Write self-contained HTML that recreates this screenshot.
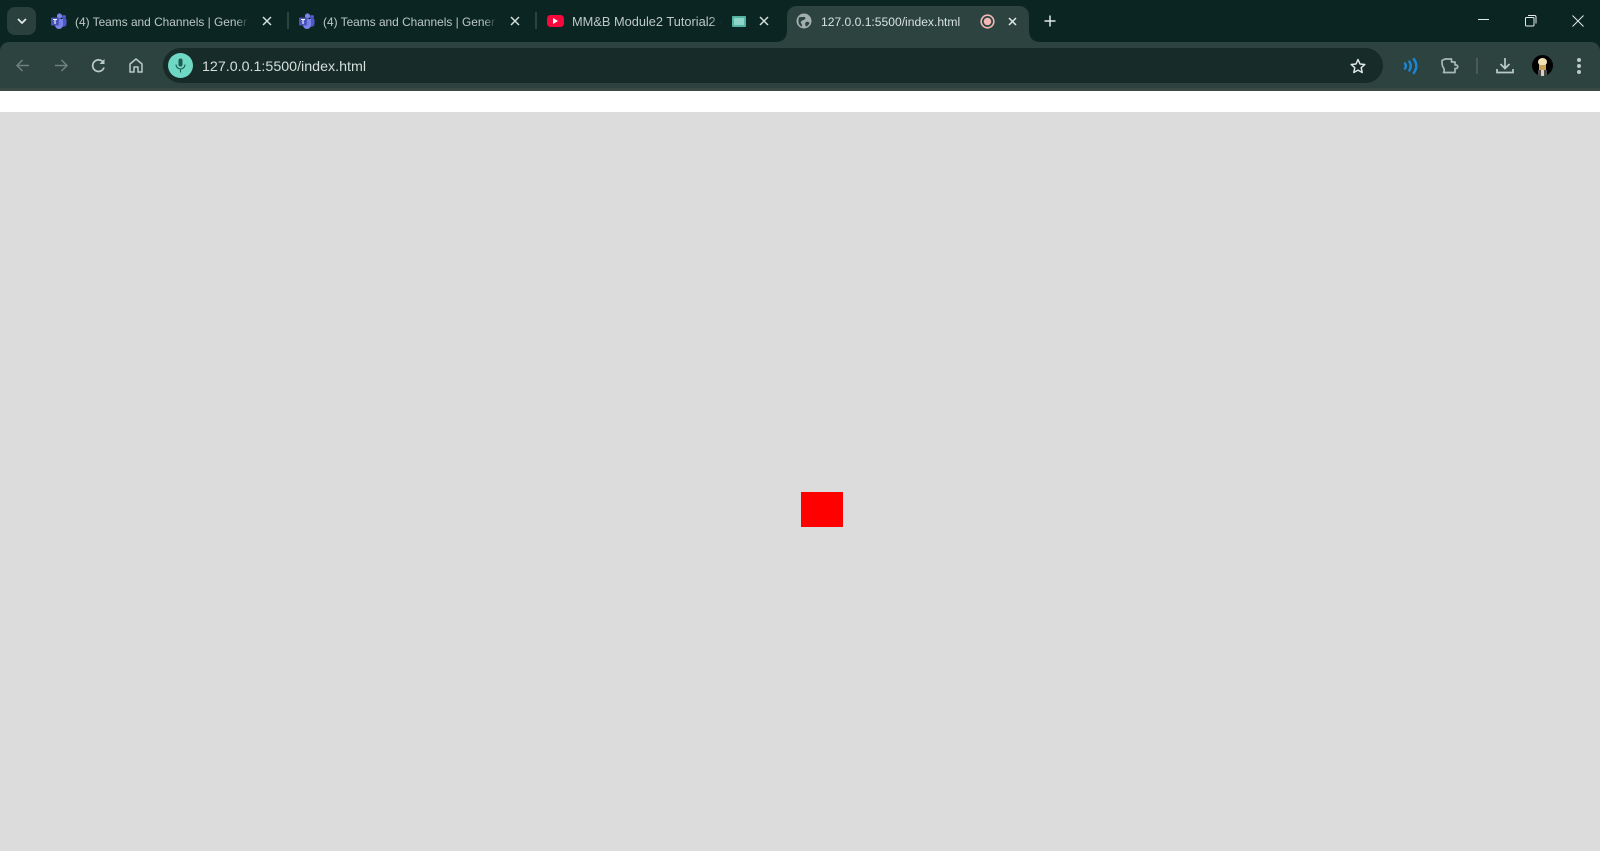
<!DOCTYPE html>
<html lang="en"><head><meta charset="utf-8"><title>127.0.0.1:5500/index.html</title>
<style>
html,body{margin:0;padding:0;width:1600px;height:851px;overflow:hidden;background:#dcdcdc}
body{position:relative;font-family:"Liberation Sans",sans-serif}
.a{position:absolute}
.t{position:absolute;font-size:12.1px;line-height:16px;top:14px;color:#bdc9c6;white-space:nowrap;overflow:hidden;filter:blur(.2px)}
svg{position:absolute;overflow:visible}
</style></head><body>
<div class="a" style="left:0;top:0;width:1600px;height:60px;background:#0b2522"></div>
<div class="a" style="left:0;top:42px;width:1600px;height:46px;background:#2c4340;border-radius:9px 9px 0 0"></div>
<div class="a" style="left:0;top:88px;width:1600px;height:3px;background:#3b4846"></div>
<div class="a" style="left:0;top:91px;width:1600px;height:21px;background:#fff"></div>
<div class="a" style="left:0;top:112px;width:1600px;height:739px;background:#dcdcdc"></div>
<div class="a" style="left:801px;top:492px;width:42px;height:35px;background:#f00"></div>

<!-- tab search -->
<div class="a" style="left:7px;top:7px;width:29px;height:28px;background:#29403c;border-radius:8px"></div>
<svg style="left:17px;top:17px" width="10" height="8" viewBox="0 0 10 8"><path d="M1 2l4 4 4-4" fill="none" stroke="#dfe8e5" stroke-width="1.8"/></svg>

<!-- teams 1 -->
<svg style="left:50px;top:13px" width="17" height="16" viewBox="0 0 17 16"><circle cx="9.500" cy="3" r="2.600" fill="#7b83eb"/><circle cx="14" cy="4" r="2" fill="#5059c9"/><path d="M11 6h5.500v5a3 3 0 0 1-4 2.500z" fill="#5059c9"/><path d="M5 6h8v6a4 4 0 0 1-8 0z" fill="#7b83eb"/><rect x="1" y="4.500" width="8" height="8" rx="1" fill="#4b53bc"/><path d="M3 6.500h4M5 6.500v4.500" stroke="#fff" stroke-width="1.100"/></svg>
<div class="t" style="left:75px;width:175px;font-size:11.9px">(4) Teams and Channels | Gener</div>
<div class="a" style="left:236px;top:12px;width:14px;height:20px;background:linear-gradient(90deg,rgba(11,37,34,0),#0b2522 90%)"></div>
<svg style="left:262px;top:16px" width="10" height="10" viewBox="0 0 10 10"><path d="M1 1l8 8M9 1l-8 8" stroke="#d4dedb" stroke-width="1.500"/></svg>
<div class="a" style="left:287px;top:12px;width:1.500px;height:17px;background:#2d4340"></div>

<!-- teams 2 -->
<svg style="left:298px;top:13px" width="17" height="16" viewBox="0 0 17 16"><circle cx="9.500" cy="3" r="2.600" fill="#7b83eb"/><circle cx="14" cy="4" r="2" fill="#5059c9"/><path d="M11 6h5.500v5a3 3 0 0 1-4 2.500z" fill="#5059c9"/><path d="M5 6h8v6a4 4 0 0 1-8 0z" fill="#7b83eb"/><rect x="1" y="4.500" width="8" height="8" rx="1" fill="#4b53bc"/><path d="M3 6.500h4M5 6.500v4.500" stroke="#fff" stroke-width="1.100"/></svg>
<div class="t" style="left:323px;width:175px;font-size:11.9px">(4) Teams and Channels | Gener</div>
<div class="a" style="left:484px;top:12px;width:14px;height:20px;background:linear-gradient(90deg,rgba(11,37,34,0),#0b2522 90%)"></div>
<svg style="left:510px;top:16px" width="10" height="10" viewBox="0 0 10 10"><path d="M1 1l8 8M9 1l-8 8" stroke="#d4dedb" stroke-width="1.500"/></svg>
<div class="a" style="left:535px;top:12px;width:1.500px;height:17px;background:#2d4340"></div>

<!-- youtube -->
<div class="a" style="left:547px;top:15px;width:17px;height:12px;background:#f5093c;border-radius:3.500px"></div>
<svg style="left:553px;top:18px" width="6" height="6" viewBox="0 0 6 6"><path d="M0 0l5 3-5 3z" fill="#fff"/></svg>
<div class="t" style="left:572px;width:152px;font-size:12.8px">MM&amp;B Module2 Tutorial2 - Google</div>
<div class="a" style="left:710px;top:12px;width:14px;height:20px;background:linear-gradient(90deg,rgba(11,37,34,0),#0b2522 85%)"></div>
<div class="a" style="left:732px;top:16px;width:10px;height:7px;border:2px solid #55b5a4;background:#8fd6c8;border-radius:1px"></div>
<svg style="left:759px;top:16px" width="10" height="10" viewBox="0 0 10 10"><path d="M1 1l8 8M9 1l-8 8" stroke="#d4dedb" stroke-width="1.500"/></svg>

<!-- active tab -->
<svg style="left:775px;top:6px" width="266" height="37" viewBox="0 0 266 37"><path d="M0 36c8 0 12-4 12-12V10C12 4 16 0 22 0H244c6 0 10 4 10 10V24c0 8 4 12 12 12z" fill="#2c4340"/></svg>
<svg style="left:796px;top:13px" width="16" height="16" viewBox="0 0 16 16"><circle cx="8" cy="8" r="7.500" fill="#a3afac"/><path d="M3 4.500c2-.8 4-.5 6-.5 1 1 0 2.500-1.500 3S4 8.500 5 10c.5 1 1.500 2 1 3.500C4 13 2.500 11 2.500 8.500c0-1.500 0-3 .5-4zM10 9c1.500-.5 3 0 3.500 1-.5 1.500-2 3-3.500 3.500-1-1.500-1.200-3.500 0-4.500z" fill="#2c4340"/></svg>
<div class="t" style="left:821px;color:#d8e2df">127.0.0.1:5500/index.html</div>
<svg style="left:980px;top:14px" width="15" height="15" viewBox="0 0 15 15"><circle cx="7.500" cy="7.500" r="6.300" fill="none" stroke="#f2b8b5" stroke-width="1.600"/><circle cx="7.500" cy="7.500" r="3.800" fill="#f2b8b5"/></svg>
<svg style="left:1008px;top:17px" width="9" height="9" viewBox="0 0 9 9"><path d="M1 1l7 7M8 1l-7 7" stroke="#dfe8e5" stroke-width="1.500"/></svg>
<svg style="left:1044px;top:15px" width="12" height="12" viewBox="0 0 12 12"><path d="M6 .5v11M.5 6h11" stroke="#dfe8e5" stroke-width="1.500"/></svg>

<!-- window controls -->
<svg style="left:1478px;top:19px" width="12" height="2" viewBox="0 0 12 2"><path d="M0 .5h11" stroke="#e3ebe9" stroke-width="1"/></svg>
<svg style="left:1525px;top:15px" width="12" height="12" viewBox="0 0 12 12"><rect x=".5" y="2.500" width="8.500" height="8.500" rx="1" fill="none" stroke="#e3ebe9"/><path d="M3 .5h6.500a1.500 1.500 0 0 1 1.500 1.500v6.500" fill="none" stroke="#e3ebe9"/></svg>
<svg style="left:1572px;top:15px" width="12" height="12" viewBox="0 0 12 12"><path d="M.5.500l11 11M11.500.5l-11 11" stroke="#e3ebe9" stroke-width="1"/></svg>

<!-- nav -->
<svg style="left:16px;top:59px" width="14" height="13" viewBox="0 0 14 13"><path d="M13 6.500H1.500M6.500 1l-5.500 5.500 5.500 5.500" fill="none" stroke="#6d817d" stroke-width="1.500"/></svg>
<svg style="left:54px;top:59px" width="14" height="13" viewBox="0 0 14 13"><path d="M1 6.500h11.500M7.500 1l5.500 5.500-5.500 5.500" fill="none" stroke="#6d817d" stroke-width="1.500"/></svg>
<svg style="left:91px;top:58px" width="15" height="15" viewBox="0 0 15 15"><path d="M13 9.500a5.800 5.800 0 1 1-1-5.500" fill="none" stroke="#bccac6" stroke-width="1.700"/><path d="M13.500 1v5H8.500z" fill="#bccac6"/></svg>
<svg style="left:129px;top:58px" width="14" height="15" viewBox="0 0 14 15"><path d="M1 6l6-5 6 5v8H9V9H5v5H1z" fill="none" stroke="#bccac6" stroke-width="1.500" stroke-linejoin="round"/></svg>

<!-- omnibox -->
<div class="a" style="left:163px;top:48px;width:1220px;height:35px;background:#172b28;border-radius:18px"></div>
<div class="a" style="left:168px;top:53px;width:25px;height:25px;background:#6fd8c4;border-radius:50%"></div>
<svg style="left:175px;top:58px" width="11" height="15" viewBox="0 0 11 15"><rect x="3.500" y="0.500" width="4" height="8" rx="2" fill="#1c5a50"/><path d="M1 6.500a4.500 4.500 0 0 0 9 0M5.500 11v3.500" fill="none" stroke="#1c5a50" stroke-width="1.100"/></svg>
<div class="a" style="left:202px;top:58px;font-size:14.25px;line-height:18px;color:#d5dfdc;white-space:nowrap;filter:blur(.2px)">127.0.0.1:5500/index.html</div>
<svg style="left:1350px;top:58px" width="16" height="16" viewBox="0 0 16 16"><path d="M8 1.500l2 4.500 4.800.5-3.600 3.200 1 4.800L8 12.100 3.800 14.500l1-4.800L1.200 6.500 6 6z" fill="none" stroke="#dfe8e5" stroke-width="1.500" stroke-linejoin="round"/></svg>

<!-- right toolbar -->
<svg style="left:1403px;top:58px" width="16" height="16" viewBox="0 0 16 16"><path d="M2 5.500q1.800 2.500 0 5M6.300 3.500q3 4.500 0 9M10.800 1q5 7 0 14" fill="none" stroke="#1a86d8" stroke-width="2.400" stroke-linecap="round"/></svg>
<svg style="left:1440px;top:57px" width="18" height="17" viewBox="0 0 18 17"><path d="M2 3.500l3-1.500h6.500v3h3.500v3h1a1.600 1.600 0 0 1 0 3.500h-1v4H3.500c1-2 1.200-3-.5-5.500C2.200 9 2 6 2 3.500z" fill="none" stroke="#a8bab6" stroke-width="1.700" stroke-linejoin="round"/></svg>
<div class="a" style="left:1476px;top:58px;width:1.500px;height:16px;background:#475c58"></div>
<svg style="left:1496px;top:57px" width="18" height="17" viewBox="0 0 18 17"><path d="M9 1v10M4.500 7l4.500 4.500L13.500 7M1 12v3.500h16V12" fill="none" stroke="#bccac6" stroke-width="1.700"/></svg>
<div class="a" style="left:1532px;top:55px;width:21px;height:21px;background:#000;border-radius:50%;overflow:hidden">
  <div class="a" style="left:6px;top:3px;width:9px;height:8px;background:#f0e2b4;border-radius:50%"></div>
  <div class="a" style="left:7px;top:10px;width:7px;height:6px;background:#c9a35a"></div>
  <div class="a" style="left:6px;top:15px;width:9px;height:6px;background:#4a4a48"></div>
  <div class="a" style="left:9px;top:15px;width:3px;height:6px;background:#d8d2c6"></div>
</div>
<div class="a" style="left:1577px;top:58px;width:4px;height:4px;background:#bccac6;border-radius:50%;box-shadow:0 6px 0 #bccac6,0 12px 0 #bccac6"></div>
</body></html>
